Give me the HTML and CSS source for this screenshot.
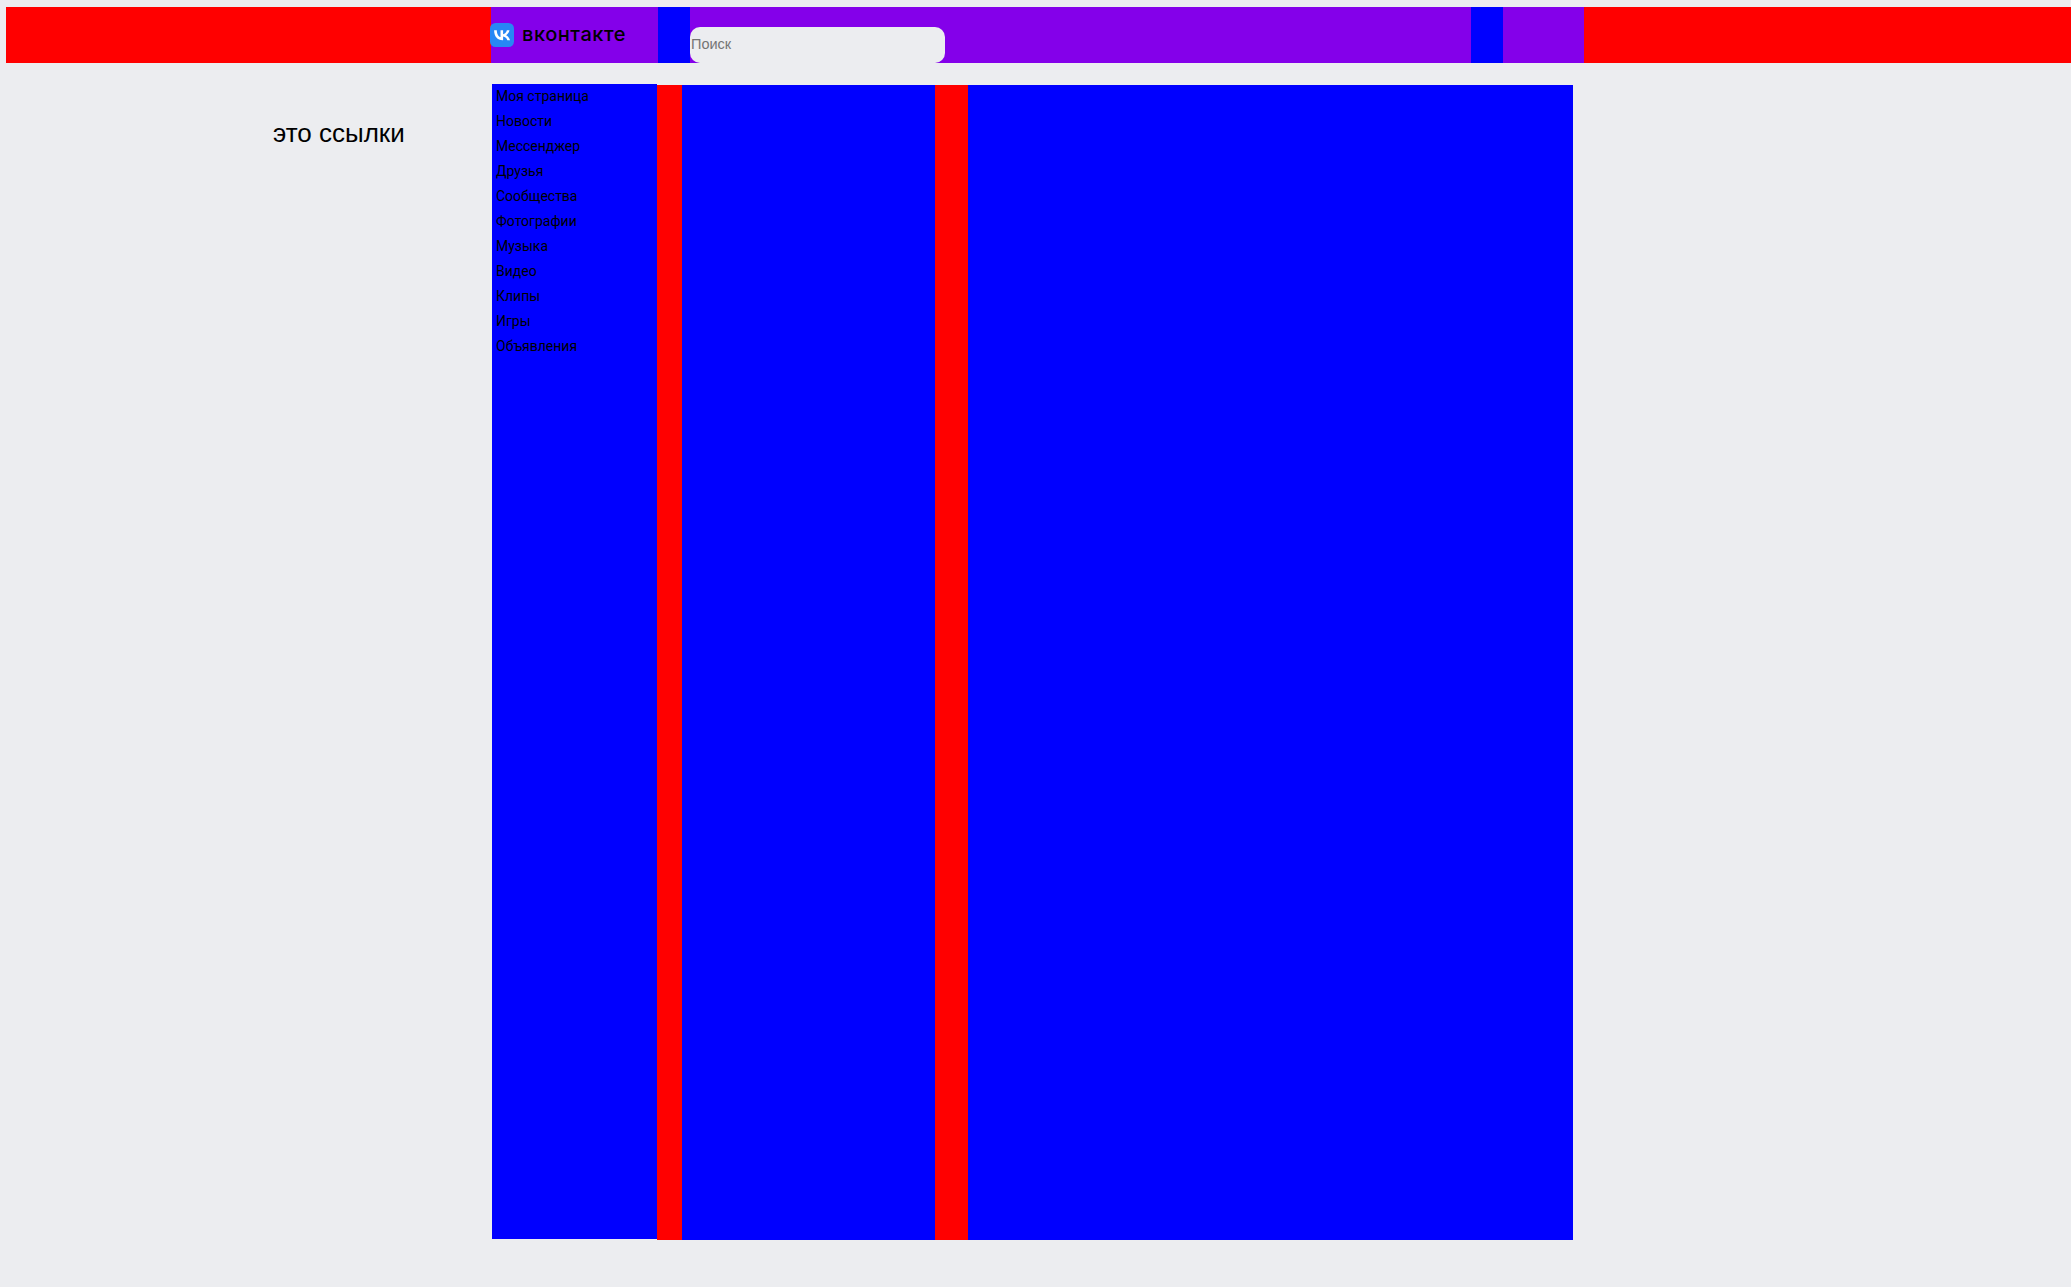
FILE: index.html
```html
<!DOCTYPE html>
<html lang="ru">
<head>
    <meta charset="UTF-8">
    <meta name="viewport" content="width=device-width, initial-scale=1.0">
    <title>ВКонтакте</title>
    <link rel="stylesheet" href="styles.css">
</head>
<body>
    <header class="topbar">
        <div class="topbar-inner">
            <a class="logo" href="#">
                <svg class="logo-icon" viewBox="0 0 24 24" width="24" height="24">
                    <rect width="24" height="24" rx="5.5" fill="#2787f5"/>
                    <path fill="#fff" d="M12.8 17.2c-5.5 0-8.6-3.8-8.7-10h2.7c.1 4.6 2.100 6.500 3.700 6.900V7.200h2.600v4c1.600-.2 3.200-2 3.800-4h2.600c-.4 2.400-2.200 4.200-3.500 5 1.300.6 3.300 2.200 4.100 5h-2.800c-.6-1.900-2.100-3.400-4.200-3.600v3.600h-.3z"/>
                </svg>
                <span class="logo-text">вконтакте</span>
            </a>
            <div class="spacer"></div>
            <div class="search">
                <input class="search-input" type="text" placeholder="Поиск">
            </div>
            <div class="spacer"></div>
            <div class="profile"></div>
        </div>
    </header>

    <div class="page">
        <div class="note">это ссылки</div>

        <nav class="sidebar">
            <a href="#">Моя страница</a>
            <a href="#">Новости</a>
            <a href="#">Мессенджер</a>
            <a href="#">Друзья</a>
            <a href="#">Сообщества</a>
            <a href="#">Фотографии</a>
            <a href="#">Музыка</a>
            <a href="#">Видео</a>
            <a href="#">Клипы</a>
            <a href="#">Игры</a>
            <a href="#">Объявления</a>
        </nav>

        <main class="content">
            <div class="gap gap-first"></div>
            <div class="column column-narrow"></div>
            <div class="gap gap-second"></div>
            <div class="column column-wide"></div>
        </main>
    </div>
</body>
</html>
```

FILE: styles.css
```css
/* Общие стили */
body {
    margin: 0;
    padding: 7px 0 0 6px;
    background-color: #ecedf0;
    color: #000;
    font-family: 'Roboto', sans-serif;
}

a {
    color: #000;
    text-decoration: none;
}

/* Шапка */
.topbar {
    height: 56px;
    padding-left: 485px;
    background-color: #f00;
}

.topbar-inner {
    display: flex;
    width: 1093px;
    height: 100%;
    background-color: #8400ea;
}

.logo {
    display: flex;
    align-items: center;
    width: 167px;
    height: 33px;
    margin-top: 10px;
    margin-left: -1px;
    margin-right: 1px;
    gap: 8px;
}

.logo-icon {
    flex-shrink: 0;
    margin-top: 2px;
}

.logo-text {
    font-family: 'Inter', sans-serif;
    font-size: 20px;
    font-weight: 500;
    letter-spacing: 0.55px;
}

.spacer {
    width: 32px;
    background-color: #00f;
}

.search {
    display: flex;
    flex: 1;
    align-items: flex-end;
}

.search-input {
    width: 255px;
    height: 36px;
    padding: 0 1px 2px;
    box-sizing: border-box;
    border: none;
    border-radius: 10px;
    background-color: #ecedf0;
    font-family: 'Liberation Sans', sans-serif;
    font-size: 14.5px;
}

.profile {
    width: 81px;
}

/* Основная часть */
.page {
    display: flex;
    margin-top: 21px;
}

.note {
    width: 486px;
    padding: 35px 0 0 267px;
    box-sizing: border-box;
    font-family: 'Liberation Sans', sans-serif;
    font-size: 26px;
    line-height: 28px;
}

.sidebar {
    display: flex;
    flex-direction: column;
    width: 165px;
    height: 1155px;
    box-sizing: border-box;
    background-color: #00f;
}

.sidebar a {
    height: 25px;
    padding-left: 4px;
    font-size: 14px;
    line-height: 25px;
}

.content {
    display: flex;
    width: 916px;
    height: 1155px;
    margin-top: 1px;
}

.gap {
    background-color: #f00;
}

.gap-first {
    width: 25px;
}

.gap-second {
    width: 33px;
}

.column {
    background-color: #00f;
}

.column-narrow {
    width: 253px;
}

.column-wide {
    flex: 1;
}
```
